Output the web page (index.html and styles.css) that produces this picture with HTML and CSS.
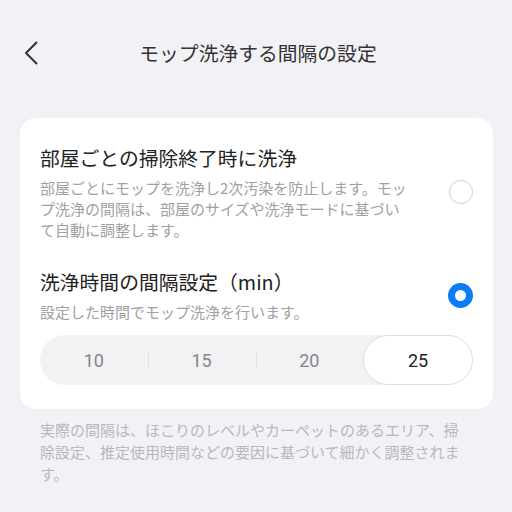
FILE: index.html
```html
<!DOCTYPE html>
<html>
<head>
  <title>モップ洗浄する間隔の設定</title>
  <link rel="stylesheet" href="styles.css">
</head>
<body>
  <div id="header">
    <button id="back-button" aria-label="戻る">
      <svg width="14" height="24" viewBox="0 0 14 24">
        <path d="M12.5 1.5 L2 12 L12.5 22.5" fill="none" stroke="#333" stroke-width="2" stroke-linecap="round" stroke-linejoin="round"/>
      </svg>
    </button>
    <h1>モップ洗浄する間隔の設定</h1>
  </div>

  <div id="settings-card">
    <div class="option-row">
      <div class="option-text">
        <div class="option-title">部屋ごとの掃除終了時に洗浄</div>
        <div class="option-desc">部屋ごとにモップを洗浄し2次汚染を防止します。モップ洗浄の間隔は、部屋のサイズや洗浄モードに基づいて自動に調整します。</div>
      </div>
      <div class="radio"></div>
    </div>

    <div class="option-row">
      <div class="option-text">
        <div class="option-title">洗浄時間の間隔設定（min）</div>
        <div class="option-desc">設定した時間でモップ洗浄を行います。</div>
      </div>
      <div class="radio checked"></div>
    </div>

    <div id="interval-picker">
      <div class="segment">10</div>
      <div class="segment">15</div>
      <div class="segment">20</div>
      <div class="segment selected">25</div>
    </div>
  </div>

  <p id="note">実際の間隔は、ほこりのレベルやカーペットのあるエリア、掃除設定、推定使用時間などの要因に基づいて細かく調整されます。</p>
</body>
</html>
```

FILE: styles.css
```css
body {
  margin: 0;
  background-color: #f2f2f6;
  font-family: "Noto Sans CJK JP", "Noto Sans", sans-serif;
  color: #222;
}

#header {
  position: relative;
  height: 60px;
  margin-top: 23px;
  margin-bottom: 35px;
  display: flex;
  align-items: flex-start;
  justify-content: center;
}

#header h1 {
  margin: 0;
  font-size: 19.8px;
  font-weight: 400;
  line-height: 28px;
  color: #333;
  margin-top: 16px;
  margin-left: 4px;
}

#back-button {
  position: absolute;
  left: 24px;
  top: 18px;
  padding: 0;
  border: none;
  background: none;
}

#settings-card {
  margin: 0 19px 0 20px;
  padding: 26px 20px 24px;
  background-color: #fff;
  border-radius: 16px;
}

.option-row {
  display: flex;
  align-items: center;
  justify-content: space-between;
}

.option-row + .option-row {
  margin-top: 28px;
}

.option-text {
  width: 371px;
}

.option-title {
  font-size: 19.8px;
  line-height: 28px;
}

.option-desc {
  margin-top: 5px;
  font-size: 15px;
  line-height: 21px;
  color: #a0a0a4;
}

.radio {
  width: 22px;
  height: 22px;
  border: 1.5px solid #cfcfd2;
  border-radius: 50%;
}

.radio.checked {
  width: 11px;
  height: 11px;
  border: 7px solid #0a7cf6;
}

#interval-picker {
  display: flex;
  margin-top: 13px;
  height: 50px;
  background-color: #f2f2f5;
  border-radius: 25px;
}

.segment {
  flex: 1;
  display: flex;
  align-items: center;
  justify-content: center;
  font-family: Roboto, "Noto Sans", sans-serif;
  font-size: 18px;
  color: #85858a;
  position: relative;
}

.segment + .segment::before {
  content: "";
  position: absolute;
  left: 0;
  top: 17px;
  height: 17px;
  border-left: 1px solid #e2e2e6;
}

.segment.selected {
  color: #222;
  background-color: #fff;
  border: 1.5px solid #dedee2;
  border-radius: 25px;
}

.segment.selected::before {
  display: none;
}

#note {
  margin: 10px 40px 0;
  font-size: 15px;
  line-height: 22px;
  color: #b8b8bc;
}
```
